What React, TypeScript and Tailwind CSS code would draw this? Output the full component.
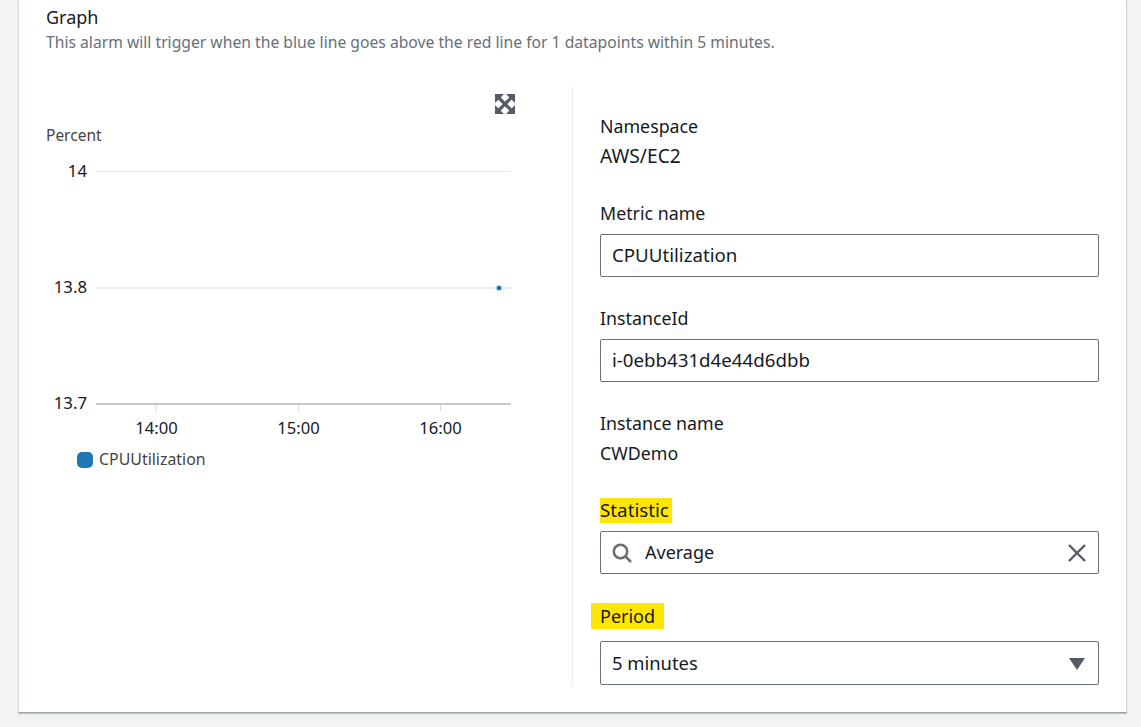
const font = "font-['Noto_Sans','Open_Sans',sans-serif]"

function Label({ children }: { children: React.ReactNode }) {
  return <div className="h-[24px] text-[17.8px] leading-[22px] text-[#16191f]">{children}</div>
}

function TextBox({ value }: { value: string }) {
  return (
    <div className="mt-[8px] flex h-[43px] items-center rounded-[2px] border border-[#687078] bg-white px-[11px] text-[18.7px] text-[#16191f]">
      {value}
    </div>
  )
}

function Chart() {
  return (
    <svg width="480" height="364" viewBox="0 -4 480 364" className="block">
      <text x="0" y="14" fontSize="15.5" fill="#444">Percent</text>
      <line x1="50" y1="44.5" x2="465" y2="44.5" stroke="#eaeded" strokeWidth="1" />
      <line x1="50" y1="161" x2="465" y2="161" stroke="#eaeded" strokeWidth="2" />
      <line x1="50" y1="277" x2="465" y2="277" stroke="#c8c8c8" strokeWidth="2" />
      <circle cx="453" cy="161" r="2.5" fill="#1f77b4" />
      <text x="41" y="50" fontSize="16.8" fill="#16191f" textAnchor="end">14</text>
      <text x="41" y="166" fontSize="16.8" fill="#16191f" textAnchor="end">13.8</text>
      <text x="41" y="282" fontSize="16.8" fill="#16191f" textAnchor="end">13.7</text>
      <line x1="110.5" y1="278" x2="110.5" y2="284" stroke="#d5dbdb" />
      <line x1="252.5" y1="278" x2="252.5" y2="284" stroke="#d5dbdb" />
      <line x1="394.5" y1="278" x2="394.5" y2="284" stroke="#d5dbdb" />
      <text x="110.5" y="307" fontSize="16.6" fill="#16191f" textAnchor="middle">14:00</text>
      <text x="252.5" y="307" fontSize="16.6" fill="#16191f" textAnchor="middle">15:00</text>
      <text x="394.5" y="307" fontSize="16.6" fill="#16191f" textAnchor="middle">16:00</text>
      <rect x="31" y="325" width="16" height="16" rx="5" fill="#1f77b4" />
      <text x="53" y="338" fontSize="15.9" fill="#444">CPUUtilization</text>
    </svg>
  )
}

export default function App() {
  return (
    <div className={`h-[727px] w-[1141px] overflow-hidden bg-[#f2f3f3] ${font}`}>
      <div className="ml-[18px] h-[713px] w-[1109px] border-x border-b border-x-[#d5dbdb] border-b-[#9aa3a8] bg-white pl-[27px] shadow-[0_1px_1px_rgba(0,28,36,0.2)]">
        <div className="pt-[5px] text-[18px] leading-[24px] text-[#16191f]">Graph</div>
        <div className="mt-[2px] text-[15.7px] leading-[22px] text-[#687078]">
          This alarm will trigger when the blue line goes above the red line for 1 datapoints within 5 minutes.
        </div>
        <div className="mt-[33px] flex">
          <div className="w-[526px] shrink-0">
            <div className="flex h-[37px] w-[469px] justify-end pt-[8px]">
              <svg width="20" height="20" viewBox="0 0 20 20" fill="#545b64">
                <path d="M0 0h9L0 9zM20 0h-9l9 9zM0 20h9l-9-9zM20 20h-9l9-9z" />
                <path d="M3 3l14 14M17 3L3 17" stroke="#545b64" strokeWidth="3.2" />
              </svg>
            </div>
            <Chart />
          </div>
          <div className="h-[600px] w-[501px] border-l border-[#eaeded] pl-[27px]">
            <div className="w-[499px] pt-[29px]">
              <Label>Namespace</Label>
              <div className="mt-[5px] h-[24px] text-[19.2px] leading-[24px] text-[#16191f]">AWS/EC2</div>
              <div className="mt-[34px]"><Label>Metric name</Label></div>
              <TextBox value="CPUUtilization" />
              <div className="mt-[30px]"><Label>InstanceId</Label></div>
              <TextBox value="i-0ebb431d4e44d6dbb" />
              <div className="mt-[30px]"><Label>Instance name</Label></div>
              <div className="mt-[5px] h-[24px] text-[17.8px] leading-[24px] text-[#16191f]">CWDemo</div>
              <div className="mt-[33px] flex">
                <span className="bg-[#ffe600] pr-[3px] text-[18.8px] leading-[25px] text-[#16191f]">Statistic</span>
              </div>
              <div className="mt-[8px] flex h-[43px] items-center rounded-[2px] border border-[#687078] bg-white px-[11px] text-[18px] text-[#16191f]">
                <svg width="20" height="20" viewBox="0 0 20 20" fill="none" stroke="#687078" strokeWidth="2.6">
                  <circle cx="8.5" cy="8.5" r="6.7" />
                  <path d="M13.2 13.2L19 19" />
                </svg>
                <span className="ml-[13px] flex-1">Average</span>
                <svg width="20" height="20" viewBox="0 0 20 20" fill="none" stroke="#545b64" strokeWidth="2.4">
                  <path d="M2 2l16 16M18 2L2 18" />
                </svg>
              </div>
              <div className="mt-[29px] flex">
                <span className="-ml-[9px] bg-[#ffe600] pl-[9px] pr-[9px] text-[18px] leading-[26px] text-[#16191f]">Period</span>
              </div>
              <div className="mt-[12px] flex h-[44px] items-center rounded-[2px] border border-[#687078] bg-white pl-[11px] pr-[13px] text-[18.4px] text-[#16191f]">
                <span className="flex-1">5 minutes</span>
                <svg width="16" height="13" viewBox="0 0 16 13">
                  <path d="M0 1h16L8 13z" fill="#545b64" />
                </svg>
              </div>
            </div>
          </div>
        </div>
      </div>
    </div>
  )
}
